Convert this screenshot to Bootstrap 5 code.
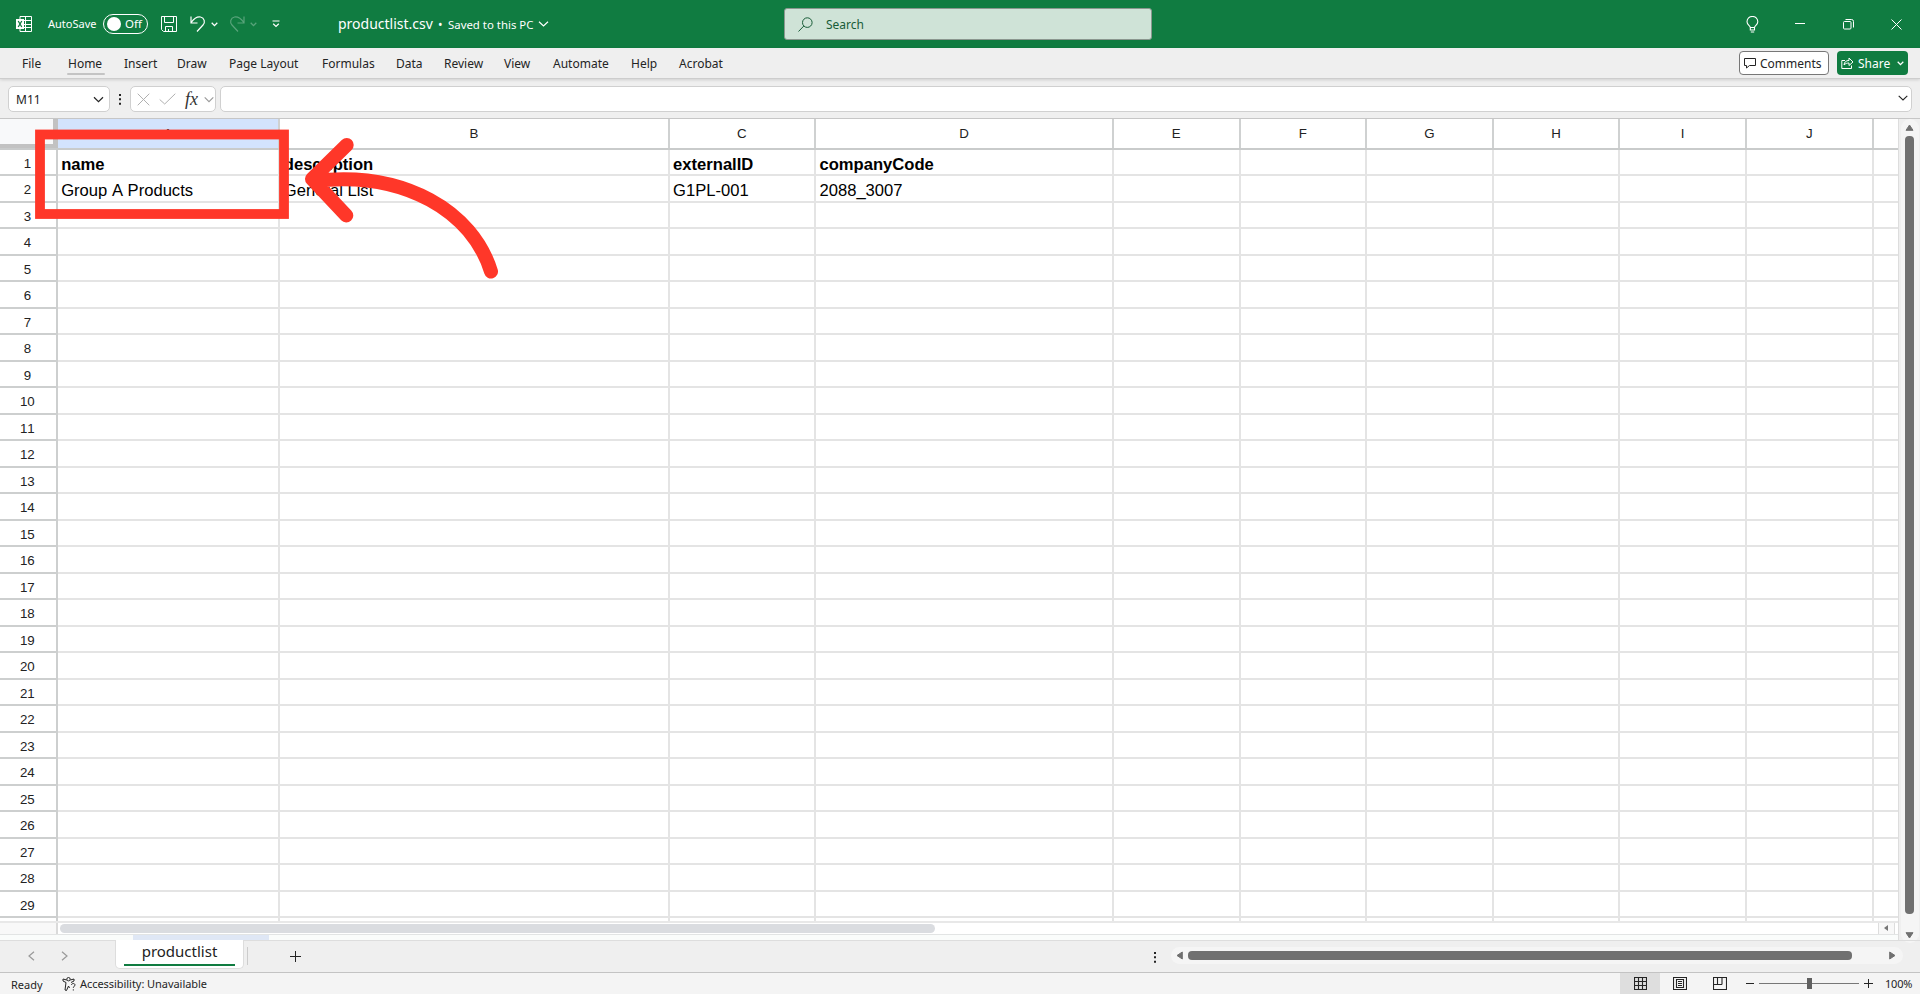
<!DOCTYPE html>
<html lang="en">
<head>
<meta charset="utf-8">
<title>productlist.csv</title>
<link href="https://cdn.jsdelivr.net/npm/bootstrap@5.3.0/dist/css/bootstrap.min.css" rel="stylesheet">
<style>
body{width:1920px;height:994px;overflow:hidden;font-family:"Noto Sans","Open Sans",sans-serif;font-size:12px;line-height:16px;color:#242424;background:#efefef}
svg{display:block;flex:none;fill:none;stroke:currentColor}
.s{white-space:nowrap;display:inline-block}
.titlebar{height:48px;background:#107c41;color:#fff}
.titlebar .side{width:784px}
.toggle{width:45px;height:20px;border:1px solid #fff;border-radius:10px;padding:0 5px 0 3px}
.knob{width:14px;height:14px;border-radius:50%;background:#fff}
.searchbox{width:368px;height:32px;background:#cfe3d7;border:1px solid #8b978f;border-radius:3px;color:#185c37;padding-left:13px}
.ribbon{height:31px;border-bottom:1px solid #cdcdcd;background:#efefef;box-shadow:0 1px 3px #0002;position:relative}
.tabs{display:grid;grid-template-columns:46px 56px 53px 52px 93px 74px 48px 60px 49px 78px 48px 80px;padding-left:22px;line-height:31px}
.tabs .on{position:relative}
.tabs .on::after{content:"";position:absolute;left:-1px;width:38px;bottom:4px;height:2px;background:#c4c4c4;border-radius:1px}
.cbtn{height:24px;border:1px solid #777;border-radius:4px;background:#fff;width:90px;padding-left:4px;margin-top:3px}
.sbtn{height:24px;border-radius:4px;background:#107c41;color:#fff;width:71px;padding-left:4px;margin:3px 12px 0 8px}
.fbar{height:40px;border-bottom:1px solid #c6c6c6;padding:7px 8px 0}
.fbox{height:26px;background:#fff;border:1px solid #d0d0d0;border-radius:5px}
.fx{font:italic 400 18px "Liberation Serif",serif;color:#333;margin-left:9px;width:19px}
.work{height:821px}
.sheet{width:1898.5px;background:#fff;border-right:1px solid #ddd;font-family:"Liberation Sans",Arial,sans-serif;font-kerning:none;overflow:hidden}
.colhead{height:30.5px;border-bottom:2px solid #c9cbcb}
.colhead>div{border-right:2px solid #cfd1d1;text-align:center;line-height:29px;font-size:13.3px;color:#222}
.colhead .corner{background:#f8f9fa;border-right:5px solid #c2c2c2;border-bottom:4px solid #c2c2c2}
.colhead .sel{background:#d3e3fd}
.g{display:grid;grid-template-columns:57.7px 222.6px 389.3px 146.4px 298px 126.6px 126.6px 126.6px 126.6px 126.6px 126.6px 1fr}
.rows{height:771px;overflow:hidden}
.line{height:26.52px;grid-template-rows:26.52px}
.line>div{border-right:2px solid #e4e4e4;border-bottom:2px solid #e4e4e4;font-size:16.6px;line-height:29px;padding-left:3.500px;white-space:nowrap;color:#000}
.line>div:first-child{border-color:#cdcfcf;font-size:13.3px;line-height:27px;text-align:center;padding:0 1px 0 0;color:#222}
.line>div:last-child,.colhead>div:last-child{border-right:0}
.line.hd>div:not(:first-child){font-weight:700}
.hscroll{height:13px;border-top:2px solid #e8e8e8;background:#fff}
.hscroll .hc{width:58px;background:#f8f8f8;border-right:2px solid #dadada}
.hthumb{width:875px;height:9px;border-radius:5px;background:#dadce0;margin:1px 0 0 2px}
.below{height:6.500px;border-top:1px solid #e2e4e4;background:#fafcfb}
.below div{margin-left:133px;width:136px;height:6px;background:#dfe7f5}
.vs{width:18px;background:#f5f5f5;border-radius:9px;margin:0 0 0 2px;height:824px}
.vthumb{width:9px;height:778px;border-radius:4px;background:#707070}
.tabstrip{height:33px;border-bottom:1px solid #c3c3c3;border-top:1px solid #ddd}
.stab{width:129px;height:29px;background:#fff;border:1px solid #ddd;border-top:0;border-radius:0 0 5px 5px;padding:0 8px;font-size:15px;margin-top:-1px;color:#222}
.stab .un{border-bottom:2px solid #107c41;height:26px;line-height:22px}
.hs{width:732px;height:17px;border-radius:9px;background:#f5f5f5}
.status{height:21px;background:#f4f4f4;font-size:11px}
.overlay{position:absolute;left:0;top:0;pointer-events:none}
</style>
</head>
<body class="d-flex flex-column">
<header class="titlebar d-flex align-items-center">
  <div class="side d-flex align-items-center">
    <svg class="ms-3" width="16" height="16" viewBox="0 0 16 16"><path d="M4 4V.5h11.500v15H4V12M9.500.5v15M8 4.500h7.500M8 8.500h7.500M8 11.500h7.500"/><path fill="#fff" stroke="none" d="M0 3h8v10H0z"/><path stroke="#107c41" stroke-width="1.300" d="M2.200 5l3.600 6M5.800 5l-3.600 6"/></svg>
    <span class="s" style="margin-left:16px;width:55px;font-size:11px">AutoSave</span>
    <div class="toggle d-flex align-items-center justify-content-between"><div class="knob"></div><span class="s" style="font-size:11.500px">Off</span></div>
    <svg style="margin-left:13px" width="16" height="16" viewBox="0 0 16 16"><path d="M.5.5h15v15H2.500l-2-2zM3.500.5v6h9v-6M4.500 15.500v-5h7v5M7.500 13v2.500"/></svg>
    <svg style="margin-left:13px" width="16" height="18" viewBox="0 0 16 18"><path stroke-width="1.200" d="M1 1.500V8h6.500M1.200 7.500C4 3.500 7 1.500 10.500 2c4 .8 5 5.500 2.500 8l-6 6.500"/></svg>
    <svg style="margin-left:5px" width="7" height="5" viewBox="0 0 7 5"><path stroke-width="1.300" d="M.7.8l2.800 2.800L6.300.8"/></svg>
    <svg style="margin-left:11px;opacity:.3" width="16" height="18" viewBox="0 0 16 18"><path stroke-width="1.200" d="M15 1.500V8H8.500M14.800 7.500C12 3.500 9 1.500 5.500 2c-4 .8-5 5.500-2.500 8l6 6.500"/></svg>
    <svg style="margin-left:5px;opacity:.3" width="7" height="5" viewBox="0 0 7 5"><path stroke-width="1.300" d="M.7.8l2.800 2.800L6.300.8"/></svg>
    <svg style="margin-left:15px" width="8" height="8" viewBox="0 0 8 8"><path stroke-width="1.200" d="M.5 1h7M1.200 3.800L4 6.500l2.800-2.700"/></svg>
    <span class="s" style="margin-left:58px;width:100px;font-size:14px">productlist.csv</span>
    <span class="s" style="width:10px;padding-top:1px">•</span>
    <span class="s" style="width:90px;font-size:11.400px;padding-top:1px">Saved to this PC</span>
    <svg width="11" height="6" viewBox="0 0 11 6"><path stroke-width="1.200" d="M1 .8l4.500 4.200L10 .8"/></svg>
  </div>
  <div class="searchbox d-flex align-items-center">
    <svg width="15" height="15" viewBox="0 0 15 15"><circle cx="9.300" cy="5.600" r="4.800"/><path d="M5.800 9L.5 14.500"/></svg>
    <span class="s" style="margin-left:13px;padding-top:1px">Search</span>
  </div>
  <svg style="margin-left:594px" width="13" height="17" viewBox="0 0 13 17"><path stroke-width="1.100" d="M4.300 11.500C4 9.500 1 9 1 5.800a5.400 5.400 0 0 1 10.800 0C11.800 9 8.800 9.500 8.500 11.500zV14h4.200v-2.500M4.800 16h3.400"/></svg>
  <svg style="margin-left:36px" width="10" height="2" viewBox="0 0 10 2"><path d="M0 .5h10"/></svg>
  <svg style="margin-left:38px" width="11" height="11" viewBox="0 0 11 11"><rect x=".5" y="2.500" width="7.500" height="7.500" rx="1"/><path d="M2.500.5h6a2 2 0 0 1 2 2v6"/></svg>
  <svg style="margin-left:37px" width="11" height="11" viewBox="0 0 11 11"><path d="M.5.5l10 10M10.500.5l-10 10"/></svg>
</header>
<nav class="ribbon d-flex align-items-start">
  <div class="tabs"><span>File</span><span class="on">Home</span><span>Insert</span><span>Draw</span><span class="s">Page Layout</span><span>Formulas</span><span>Data</span><span>Review</span><span>View</span><span>Automate</span><span>Help</span><span>Acrobat</span></div>
  <div class="cbtn d-flex align-items-center ms-auto">
    <svg width="12" height="11" viewBox="0 0 12 11"><path d="M.5.5h11v7H5.500L2.500 10V7.500h-2z"/></svg><span class="s" style="margin-left:4px;padding-top:1px">Comments</span></div>
  <div class="sbtn d-flex align-items-center">
    <svg width="13" height="12" viewBox="0 0 13 12"><path d="M4 3.500H.8v8h9.700V8.500M3 8c.3-3 2-4.500 5-4.500V1l4 4-4 3.500V6C6 6 4.500 6.500 3 8z"/></svg><span class="s" style="margin-left:4px;width:39px;padding-top:1px">Share</span><svg width="7" height="5" viewBox="0 0 7 5"><path stroke-width="1.300" d="M.7.8l2.800 2.800L6.300.8"/></svg></div>
</nav>
<div class="fbar d-flex">
  <div class="fbox d-flex align-items-center justify-content-between" style="width:102px;padding:0 5px 0 7px"><span style="padding-top:1px">M11</span><svg width="11" height="7" viewBox="0 0 11 7"><path stroke-width="1.200" d="M1 1.300l4.500 4.400L10 1.300"/></svg></div>
  <svg style="margin:8px 9px 0 9px" width="2" height="11" viewBox="0 0 2 11"><path stroke-width="2" d="M1 0v2M1 4.300v2M1 8.700v2"/></svg>
  <div class="fbox d-flex align-items-center" style="width:86px;padding-left:6px;color:#b0b0b0">
    <svg width="13" height="13" viewBox="0 0 13 13"><path d="M.7.7l11.600 11.600M12.300.7L.7 12.300"/></svg>
    <svg style="margin-left:9px" width="17" height="12" viewBox="0 0 17 12"><path d="M.7 6.500l5 4.500L16.300.7"/></svg>
    <i class="s fx">fx</i>
    <svg width="10" height="7" viewBox="0 0 10 7"><path stroke="#999" stroke-width="1.100" d="M.7 1.300L5 5.700 9.300 1.300"/></svg>
  </div>
  <div class="fbox flex-grow-1 d-flex justify-content-end" style="margin-left:4px;padding:8px 3px 0"><svg width="10" height="6" viewBox="0 0 10 6"><path stroke-width="1.100" d="M.7.8L5 5 9.300.8"/></svg></div>
</div>
<main class="work d-flex">
  <div class="sheet">
    <div class="colhead g"><div class="corner"></div><div class="sel">A</div><div>B</div><div>C</div><div>D</div><div>E</div><div>F</div><div>G</div><div>H</div><div>I</div><div>J</div><div></div></div>
    <div class="rows" id="rows"></div>
    <div class="hscroll d-flex"><div class="hc"></div><div class="hthumb"></div><div class="ms-auto d-flex align-items-center justify-content-center" style="width:17px;margin-right:3px;background:#f8f8f8;border:solid #ddd;border-width:0 1px"><svg width="4" height="6" viewBox="0 0 4 6"><path fill="#777" stroke="none" d="M4 0v6L0 3z"/></svg></div></div>
    <div class="below"><div></div></div>
  </div>
  <div class="vs d-flex flex-column align-items-center">
    <svg style="margin:5px 0 5px" width="9" height="7" viewBox="0 0 9 7"><path fill="#707070" stroke="#707070" stroke-linejoin="round" d="M4.500 1L8 6.300H1z"/></svg>
    <div class="vthumb"></div>
    <svg style="margin:18px 0 0" width="9" height="7" viewBox="0 0 9 7"><path fill="#707070" stroke="#707070" stroke-linejoin="round" d="M4.500 6L8 .7H1z"/></svg>
  </div>
</main>
<div class="tabstrip d-flex">
  <svg style="margin:10px 0 0 28px;color:#999" width="7" height="10" viewBox="0 0 7 10"><path stroke-width="1.200" d="M6 .7L1 5l5 4.300"/></svg>
  <svg style="margin:10px 0 0 26px;color:#999" width="7" height="10" viewBox="0 0 7 10"><path stroke-width="1.200" d="M1 .7L6 5 1 9.300"/></svg>
  <div class="stab" style="margin-left:47px"><div class="un text-center"><span class="s">productlist</span></div></div>
  <div style="width:1px;height:18px;background:#ccc;margin:6px 0 0 3px"></div>
  <svg style="margin:10px 0 0 42px" width="11" height="11" viewBox="0 0 11 11"><path d="M5.500 0v11M0 5.500h11"/></svg>
  <svg style="margin:11px 0 0 853px" width="2" height="11" viewBox="0 0 2 11"><path stroke-width="2" d="M1 0v2M1 4.300v2M1 8.700v2"/></svg>
  <div class="hs d-flex align-items-center" style="margin:6px 0 0 15px"><svg style="margin-left:5px" width="7" height="9" viewBox="0 0 7 9"><path fill="#707070" stroke="#707070" stroke-linejoin="round" d="M1 4.500L6.300 1v7z"/></svg><div style="margin-left:5px;width:664px;height:9px;border-radius:4px;background:#707070"></div><svg style="margin-left:37px" width="7" height="9" viewBox="0 0 7 9"><path fill="#707070" stroke="#707070" stroke-linejoin="round" d="M6 4.500L.7 1v7z"/></svg></div>
</div>
<footer class="status d-flex align-items-center">
  <span class="s" style="margin-left:11px;width:51px;padding-top:2px">Ready</span>
  <svg width="14" height="14" viewBox="0 0 14 14"><circle cx="6.500" cy="2.200" r="1.700"/><path d="M4.800 3L1 2v2l3 1.500L3 13l1.500.5L6.500 9l1 2M8.300 3L12 2v2L9 5.500M9.500 8c0-2 3.500-2 3.500 0 0 1.300-1.700 1.200-1.700 2.800M11.300 12.300v1.200"/></svg>
  <span class="s" style="margin-left:4px;letter-spacing:-.05px">Accessibility: Unavailable</span>
  <div class="ms-auto d-flex align-items-center">
    <div class="d-flex justify-content-center align-items-center" style="width:40px;height:21px;background:#dedede"><svg width="13" height="13" viewBox="0 0 13 13"><path stroke-width="1.100" d="M.5.5h12v12H.5zM4.500.5v12M8.500.5v12M.5 4.500h12M.5 8.500h12"/></svg></div>
    <svg style="margin-left:13px" width="14" height="13" viewBox="0 0 14 13"><path stroke-width="1.100" d="M.5.5h13v12H.5zM3.500 2.500h7v8h-7zM5 4.500h4M5 6.500h4M5 8.500h4"/></svg>
    <svg style="margin-left:26px" width="14" height="13" viewBox="0 0 14 13"><path stroke-width="1.100" d="M.5.5h13v12H.5zM4.500.5v7M9 .5v7M.5 7.500H9"/></svg>
    <svg style="margin-left:19px" width="8" height="2" viewBox="0 0 8 2"><path d="M0 .5h8"/></svg>
    <div class="d-flex align-items-center justify-content-center" style="margin-left:5px;width:100px;height:11px;background:linear-gradient(#777,#777) 0 5px/100% 1px no-repeat"><div style="width:5px;height:11px;background:#606060"></div></div>
    <svg style="margin-left:5px" width="9" height="9" viewBox="0 0 9 9"><path d="M4.500 0v9M0 4.500h9"/></svg>
    <span class="s" style="margin-left:12px;width:35px;font-size:11px;letter-spacing:-.2px">100%</span>
  </div>
</footer>
<svg class="overlay" width="520" height="300" viewBox="0 0 520 300"><g stroke="#ff3729"><rect x="40" y="134.500" width="244" height="79.500" stroke-width="9.800"/><path stroke-width="14" stroke-linecap="round" stroke-linejoin="round" d="M346.700 145L312 179l34.300 36.500M314 181C405 170 473 212 491 271.500"/></g></svg>
<script>
const data=[["name","description","externalID","companyCode"],["Group A Products","General List","G1PL-001","2088_3007"]];
let out="";
for(let r=1;r<=30;r++){out+=`<div class="line g${r===1?" hd":""}"><div>${r<30?r:""}</div>`;for(let c=0;c<11;c++)out+=`<div>${(data[r-1]||[])[c]||""}</div>`;out+="</div>";}
document.getElementById("rows").innerHTML=out;
</script>
<script src="https://cdn.jsdelivr.net/npm/bootstrap@5.3.0/dist/js/bootstrap.bundle.min.js"></script>
</body>
</html>
